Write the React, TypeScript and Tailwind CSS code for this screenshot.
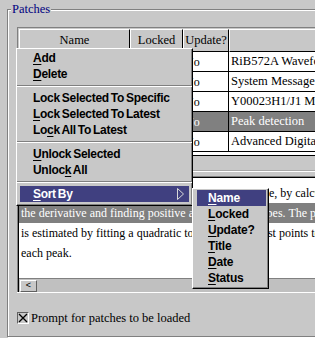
import React from "react";

const rows = [
  { title: "RiB572A Waveform Analysis", sel: false },
  { title: "System Message", sel: false },
  { title: "Y00023H1/J1 Mixed Signal", sel: false },
  { title: "Peak detection", sel: true },
  { title: "Advanced Digital Filter", sel: false },
];

const descLines = [
  { text: "This algorithm locates the peaks in the selected trace, by calculating", sel: false },
  { text: "the derivative and finding positive and negative slopes.  The peak position", sel: true },
  { text: "is estimated by fitting a quadratic to the three highest points to", sel: false },
  { text: "each peak.", sel: false },
];

// label with one underlined mnemonic letter
function Mn({ label, at }: { label: string; at: number }) {
  if (at < 0) return <>{label}</>;
  return (
    <>
      {label.slice(0, at)}
      <span className="underline decoration-1 underline-offset-[2px]">{label[at]}</span>
      {label.slice(at + 1)}
    </>
  );
}

function MenuItem({ label, at, active, arrow }: { label: string; at: number; active?: boolean; arrow?: boolean }) {
  return (
    <div
      className={`mx-[3px] flex h-[16px] items-center justify-between pl-[13px] pr-[5px] leading-none ${
        active ? "bg-[#404080] text-white" : "text-black"
      }`}
    >
      <span>
        <Mn label={label} at={at} />
      </span>
      {arrow && (
        <svg width="7" height="12" viewBox="0 0 7 12">
          <polygon points="0.5,0.5 6.5,6 0.5,11.5" fill="none" stroke="#d8d8d8" strokeWidth="1" />
        </svg>
      )}
    </div>
  );
}

function Sep() {
  return (
    <div className="flex h-[8px] items-center">
      <div className="h-[2px] w-full border-t border-b border-t-[#808080] border-b-white" />
    </div>
  );
}

export default function App() {
  return (
    <div className="relative h-[338px] w-[315px] overflow-hidden bg-[#c8c8c8] font-['Liberation_Serif',serif] text-[12px] text-black">
      {/* Group box */}
      <div className="ml-[7px] mt-[9px] h-[328px] w-[340px] border border-[#808080] pl-[9px] pt-[17px] shadow-[inset_1px_1px_0_#fff,1px_1px_0_#fff]">
        {/* Table */}
        <div className="border-l border-t border-[#808080] pl-px pt-px shadow-[0_1px_0_#fff]">
          <div className="flex h-[23px]">
            {[
              { t: "Name", w: "w-[111px]" },
              { t: "Locked", w: "w-[53px]" },
              { t: "Update?", w: "w-[46px]" },
              { t: "", w: "w-[120px]" },
            ].map((c, i) => (
              <div
                key={i}
                className={`${c.w} flex shrink-0 items-center justify-center border border-t-white border-l-white border-r-black border-b-black text-[12.5px]`}
              >
                {c.t}
              </div>
            ))}
          </div>
          <div className="h-[104px] border-b border-black bg-white">
            {rows.map((r, i) => (
              <div
                key={i}
                className={`flex h-[20px] border-b border-black ${r.sel ? "bg-[#808080] text-white" : ""}`}
              >
                <div className="w-[111px] shrink-0 border-r border-black" />
                <div className="w-[53px] shrink-0 border-r border-black" />
                <div className="flex w-[46px] shrink-0 items-center border-r border-black pl-[2px]">No</div>
                <div className="flex w-[120px] shrink-0 items-center overflow-hidden whitespace-nowrap pl-[2px] text-[12.5px]">
                  {r.title}
                </div>
              </div>
            ))}
          </div>
          <div className="h-[15px] border-b border-[#a8a8a8]" />
        </div>

        {/* Description text */}
        <div className="mt-[5px] border-l border-t border-[#808080] shadow-[0_1px_0_#fff]">
          <div className="border-l border-t border-black">
            <div className="h-[100px] overflow-hidden bg-white pt-[5px]">
              {descLines.map((l, i) => (
                <div
                  key={i}
                  className={`flex h-[20px] items-center whitespace-nowrap pl-[2px] ${l.sel ? "bg-[#808080] text-white" : ""}`}
                >
                  {l.text}
                </div>
              ))}
            </div>
            <div className="flex h-[14px] items-center border-t border-[#808080] bg-[#c0c0c0] pl-px">
              <div className="flex h-[12px] w-[17px] items-center justify-center border border-t-white border-l-white border-r-[#606060] border-b-[#606060] bg-[#c8c8c8] font-['Liberation_Sans',sans-serif] text-[9px] leading-none">
                &lt;
              </div>
            </div>
          </div>
        </div>

        {/* Checkbox */}
        <div className="mt-[17px] flex items-center gap-[2px]">
          <div className="h-[12px] w-[12px] shrink-0 border border-t-[#606060] border-l-[#606060] border-r-white border-b-white bg-[#c8c8c8]">
            <svg width="10" height="10" viewBox="0 0 10 10">
              <path d="M1 1 L9 9 M9 1 L1 9" stroke="#000" strokeWidth="1.3" />
            </svg>
          </div>
          <span className="text-[12.5px]">Prompt for patches to be loaded</span>
        </div>
      </div>

      {/* Group label */}
      <div className="absolute left-[11px] top-[2px] bg-[#c8c8c8] px-px text-[12.5px] leading-[14px] text-[#000080]">
        Patches
      </div>

      {/* Popup menu */}
      <div className="absolute left-[16px] top-[48px] h-[158px] w-[177px] border border-t-white border-l-white border-r-black border-b-black bg-[#c8c8c8] pt-px font-['Liberation_Sans',sans-serif] text-[12px] font-bold tracking-[-0.3px] shadow-[inset_-1px_-1px_0_#808080] [word-spacing:-1px]">
        <MenuItem label="Add" at={0} />
        <MenuItem label="Delete" at={0} />
        <Sep />
        <MenuItem label="Lock Selected To Specific" at={-1} />
        <MenuItem label="Lock Selected To Latest" at={0} />
        <MenuItem label="Lock All To Latest" at={2} />
        <Sep />
        <MenuItem label="Unlock Selected" at={0} />
        <MenuItem label="Unlock All" at={5} />
        <Sep />
        <MenuItem label="Sort By" at={0} active arrow />
      </div>

      {/* Sort By submenu */}
      <div className="absolute left-[192px] top-[188px] h-[101px] w-[77px] border border-t-white border-l-white border-r-black border-b-black bg-[#c8c8c8] pt-px font-['Liberation_Sans',sans-serif] text-[12px] font-bold tracking-[-0.2px] shadow-[inset_-1px_-1px_0_#808080]">
        {[
          ["Name", 0],
          ["Locked", 0],
          ["Update?", 0],
          ["Title", 0],
          ["Date", 0],
          ["Status", 0],
        ].map(([l, a], i) => (
          <div
            key={i}
            className={`ml-[4px] mr-[2px] flex h-[16px] items-center pl-[11px] leading-none ${
              i === 0 ? "bg-[#404080] text-white" : ""
            }`}
          >
            <span>
              <Mn label={l as string} at={a as number} />
            </span>
          </div>
        ))}
      </div>
    </div>
  );
}
